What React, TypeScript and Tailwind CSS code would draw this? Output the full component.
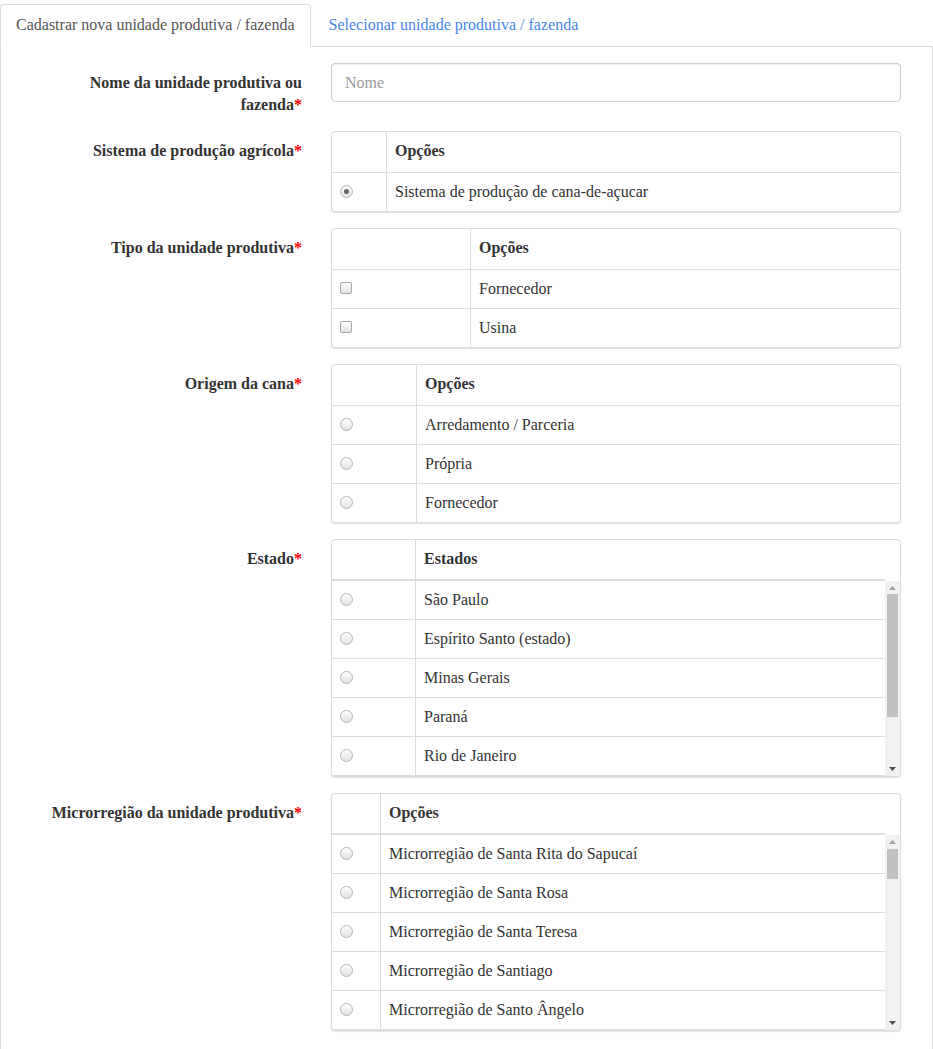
import React from "react";

type Opt = { label: string; checked?: boolean };

const estados = [
  "São Paulo",
  "Espírito Santo (estado)",
  "Minas Gerais",
  "Paraná",
  "Rio de Janeiro",
];

const micros = [
  "Santa Rita do Sapucaí",
  "Santa Rosa",
  "Santa Teresa",
  "Santiago",
  "Santo Ângelo",
].map((n) => "Microrregião de " + n);

function Radio({ checked }: { checked?: boolean }) {
  return (
    <span className="mt-[4px] flex h-[13px] w-[13px] items-center justify-center rounded-full border border-[#b4b4b4] bg-gradient-to-b from-white to-[#e2e2e2]">
      {checked && <span className="h-[5px] w-[5px] rounded-full bg-[#666]" />}
    </span>
  );
}

function Check() {
  return (
    <span className="mt-[4px] block h-[12px] w-[12px] rounded-[2px] border border-[#a8a8a8] bg-gradient-to-b from-white to-[#e2e2e2]" />
  );
}

function Row({
  opt,
  first,
  kind,
  top,
}: {
  opt: Opt;
  first: number;
  kind: "radio" | "check";
  top?: boolean;
}) {
  return (
    <div className={"flex " + (top ? "" : "border-t border-[#ddd]")}>
      <div
        className="shrink-0 border-r border-[#ddd] px-2 py-2"
        style={{ width: first }}
      >
        {kind === "radio" ? <Radio checked={opt.checked} /> : <Check />}
      </div>
      <div className="flex-1 px-2 py-2 leading-[22px]">{opt.label}</div>
    </div>
  );
}

// thumb position/size are given from the reference, per list
function Scrollbar({ thumbTop, thumbHeight }: { thumbTop: number; thumbHeight: number }) {
  return (
    <div className="relative w-[15px] shrink-0 bg-[#f1f1f1]">
      <svg className="absolute left-[4px] top-[5px]" width="7" height="4" viewBox="0 0 7 4">
        <path d="M0 4 L3.5 0 L7 4 Z" fill="#a3a3a3" />
      </svg>
      <div
        className="absolute left-[2px] w-[11px] bg-[#c1c1c1]"
        style={{ top: thumbTop, height: thumbHeight }}
      />
      <svg className="absolute bottom-[5px] left-[4px]" width="7" height="4" viewBox="0 0 7 4">
        <path d="M0 0 L7 0 L3.5 4 Z" fill="#505050" />
      </svg>
    </div>
  );
}

function OptionTable({
  head,
  first,
  opts,
  kind = "radio",
  scroll,
}: {
  head: string;
  first: number;
  opts: Opt[];
  kind?: "radio" | "check";
  scroll?: { top: number; height: number };
}) {
  return (
    <div className="overflow-hidden rounded-[4px] border border-[#ddd] bg-white shadow-[0_1px_1px_rgba(0,0,0,0.12)]">
      <div className={scroll ? "pr-[15px]" : ""}>
        <div
          className={
            "flex " +
            (scroll ? "border-b-2 border-[#ddd]" : "border-b border-[#ddd]")
          }
        >
          <div
            className="shrink-0 border-r border-[#ddd]"
            style={{ width: first }}
          />
          <div
            className={
              "flex-1 px-2 pt-2 font-bold leading-[22px] " +
              (scroll ? "pb-[9px]" : "pb-[10px]")
            }
          >
            {head}
          </div>
        </div>
      </div>
      {scroll ? (
        <div className="flex h-[195px]">
          <div className="flex-1">
            {opts.map((o, i) => (
              <Row key={i} opt={o} first={first} kind={kind} top={i === 0} />
            ))}
            <div className="border-t border-[#ddd]" />
          </div>
          <Scrollbar thumbTop={scroll.top} thumbHeight={scroll.height} />
        </div>
      ) : (
        opts.map((o, i) => (
          <Row key={i} opt={o} first={first} kind={kind} top={i === 0} />
        ))
      )}
    </div>
  );
}

function Field({
  label,
  children,
}: {
  label: React.ReactNode;
  children: React.ReactNode;
}) {
  return (
    <div className="mb-4 flex items-start">
      <label className="w-[301px] shrink-0 pl-[40px] pt-[9px] text-right font-bold leading-[22px] text-[#333]">
        {label}
        <span className="text-[#f00]">*</span>
      </label>
      <div className="ml-[29px] flex-1">{children}</div>
    </div>
  );
}

export default function App() {
  return (
    <div className="min-h-screen bg-white font-['Liberation_Serif',serif] text-[16px] text-[#333]">
      <div className="flex border-b border-[#ddd] pt-[4px]">
        <div className="-mb-px h-[43px] rounded-t-[4px] border border-[#ddd] border-b-white bg-white px-[15px] pt-[9px] leading-[22px] text-[#555]">
          Cadastrar nova unidade produtiva / fazenda
        </div>
        <div className="ml-[2px] h-[42px] border border-transparent px-[15px] pt-[9px] leading-[22px] text-[#4a86e8]">
          Selecionar unidade produtiva / fazenda
        </div>
      </div>

      <div className="border-x border-[#ddd] pb-10 pr-[31px] pt-[16px]">
        <div className="-mb-px">
          <Field label="Nome da unidade produtiva ou fazenda">
            <input
              placeholder="Nome"
              className="h-[39px] w-full rounded-[4px] border border-[#ccc] px-[13px] text-[16px] shadow-[inset_0_1px_1px_rgba(0,0,0,0.075)] outline-none placeholder:text-[#999]"
            />
          </Field>
        </div>

        <Field label="Sistema de produção agrícola">
          <OptionTable
            head="Opções"
            first={55}
            opts={[
              { label: "Sistema de produção de cana-de-açucar", checked: true },
            ]}
          />
        </Field>

        <Field label="Tipo da unidade produtiva">
          <OptionTable
            head="Opções"
            first={139}
            kind="check"
            opts={[{ label: "Fornecedor" }, { label: "Usina" }]}
          />
        </Field>

        <div className="mt-[1px]">
          <Field label="Origem da cana">
            <OptionTable
              head="Opções"
              first={85}
              opts={[
                { label: "Arredamento / Parceria" },
                { label: "Própria" },
                { label: "Fornecedor" },
              ]}
            />
          </Field>
        </div>

        <Field label="Estado">
          <OptionTable
            head="Estados"
            first={84}
            scroll={{ top: 13, height: 123 }}
            opts={estados.map((label) => ({ label }))}
          />
        </Field>

        <div className="mt-[2px]">
          <Field label="Microrregião da unidade produtiva">
            <OptionTable
              head="Opções"
              first={49}
              scroll={{ top: 14, height: 30 }}
              opts={micros.map((label) => ({ label }))}
            />
          </Field>
        </div>
      </div>
    </div>
  );
}
